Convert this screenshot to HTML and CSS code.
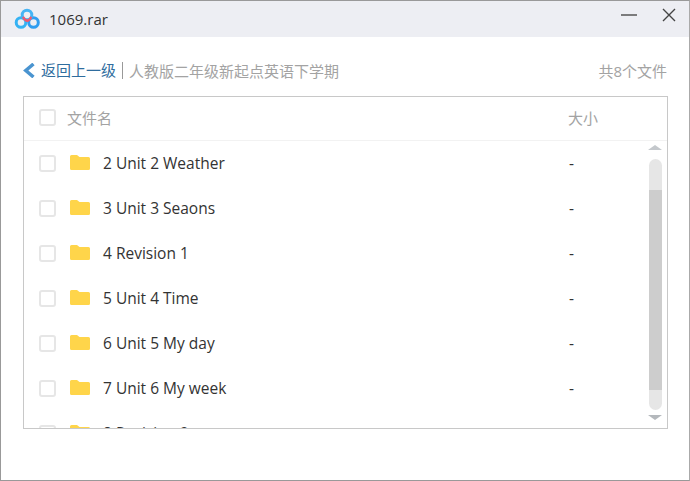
FILE: index.html
```html
<!DOCTYPE html>
<html lang="zh-CN">
<head>
    <meta charset="UTF-8">
    <title>1069.rar</title>
    <link rel="stylesheet" href="styles.css">
</head>
<body>
    <div class="window">
        <div class="titlebar">
            <svg class="logo" width="26" height="22" viewBox="0 0 26 22">
                <circle cx="7" cy="14.500" r="4.800" fill="none" stroke="#35b2f3" stroke-width="3"/>
                <circle cx="19.500" cy="14.500" r="4.800" fill="none" stroke="#2f9df0" stroke-width="3"/>
                <circle cx="13" cy="7" r="4.800" fill="none" stroke="#45b4f5" stroke-width="3"/>
                <path d="M8 9.500c1.500 3 3.200 4.400 5.200 4.400s3.700-1.400 5-4.400l-2-1.200c-.8 2-1.800 3-3 3s-2.300-1-3.200-3z" fill="#f0596f"/>
            </svg>
            <span class="filename">1069.rar</span>
            <div class="controls">
                <svg width="16" height="16" viewBox="0 0 16 16"><path d="M0 8h16" stroke="#555" stroke-width="1.500"/></svg>
                <svg width="16" height="16" viewBox="0 0 16 16"><path d="M2 2l12 12M14 2L2 14" stroke="#444" stroke-width="1.400"/></svg>
            </div>
        </div>

        <div class="crumbs">
            <svg class="back-icon" width="13" height="15" viewBox="0 0 13 15"><path d="M10.500 1L2.800 7.500l7.700 6.500" fill="none" stroke="#4a94d0" stroke-width="3.500"/></svg>
            <a class="back">返回上一级</a>
            <span class="path">人教版二年级新起点英语下学期</span>
            <span class="count">共8个文件</span>
        </div>

        <div class="file-table">
            <div class="table-head">
                <span class="check"></span>
                <span class="col-name">文件名</span>
                <span class="col-size">大小</span>
            </div>
            <div class="rows">
                <div class="row"><span class="check"></span><svg class="folder" viewBox="0 0 20 15"><use href="#folder"/></svg><span class="row-name">2 Unit 2 Weather</span><span class="row-size">-</span></div>
                <div class="row"><span class="check"></span><svg class="folder" viewBox="0 0 20 15"><use href="#folder"/></svg><span class="row-name">3 Unit 3 Seaons</span><span class="row-size">-</span></div>
                <div class="row"><span class="check"></span><svg class="folder" viewBox="0 0 20 15"><use href="#folder"/></svg><span class="row-name">4 Revision 1</span><span class="row-size">-</span></div>
                <div class="row"><span class="check"></span><svg class="folder" viewBox="0 0 20 15"><use href="#folder"/></svg><span class="row-name">5 Unit 4 Time</span><span class="row-size">-</span></div>
                <div class="row"><span class="check"></span><svg class="folder" viewBox="0 0 20 15"><use href="#folder"/></svg><span class="row-name">6 Unit 5 My day</span><span class="row-size">-</span></div>
                <div class="row"><span class="check"></span><svg class="folder" viewBox="0 0 20 15"><use href="#folder"/></svg><span class="row-name">7 Unit 6 My week</span><span class="row-size">-</span></div>
                <div class="row"><span class="check"></span><svg class="folder" viewBox="0 0 20 15"><use href="#folder"/></svg><span class="row-name">8 Revision 2</span></div>
            </div>
            <div class="scrollbar">
                <div class="arrow-up"></div>
                <div class="track"><div class="thumb"></div></div>
                <div class="arrow-down"></div>
            </div>
        </div>
    </div>

    <svg class="defs" width="0" height="0">
        <symbol id="folder" viewBox="0 0 20 15">
            <path d="M1.500 0h5.500l2.500 2h9a1.500 1.500 0 0 1 1.500 1.500v10a1.500 1.500 0 0 1-1.500 1.500h-17a1.500 1.500 0 0 1-1.500-1.500v-12a1.500 1.500 0 0 1 1.500-1.500z" fill="#ffd54a"/>
        </symbol>
    </svg>
</body>
</html>
```

FILE: styles.css
```css
html, body{
    margin: 0;
    padding: 0;
}
body{
    width: 690px;
    height: 481px;
    overflow: hidden;
    background-color: #fff;
    font-family: "Open Sans", "Noto Sans CJK SC", sans-serif;
}
.defs{
    display: block;
}
.window{
    box-sizing: border-box;
    width: 690px;
    height: 481px;
    border: 1px solid #999;
    border-right-color: #aaa;
    background-color: #fff;
}
.titlebar{
    display: flex;
    align-items: center;
    height: 36px;
    padding-left: 13px;
    background-color: #edeef3;
}
.logo{
    margin-right: 9px;
}
.filename{
    font-size: 15px;
    color: #333;
}
.controls{
    display: flex;
    gap: 24px;
    margin-left: auto;
    margin-right: 12px;
    margin-top: -9px;
}
.crumbs{
    display: flex;
    align-items: center;
    height: 20px;
    margin: 23px 22px 16px 22px;
    font-size: 15px;
}
.back-icon{
    margin-right: 5px;
}
.back{
    color: #2f6d9e;
    padding-right: 6px;
    line-height: 17px;
    border-right: 1px solid #999;
}
.path{
    color: #a3a3a3;
    padding-left: 6px;
}
.count{
    margin-left: auto;
    color: #a3a3a3;
}
.file-table{
    position: relative;
    box-sizing: border-box;
    width: 645px;
    height: 333px;
    margin-left: 22px;
    border: 1px solid #c8c8c8;
    overflow: hidden;
}
.table-head{
    display: flex;
    align-items: center;
    box-sizing: border-box;
    height: 44px;
    padding-bottom: 3px;
    border-bottom: 1px solid #f2f2f2;
    font-size: 15px;
    color: #a3a3a3;
}
.check{
    box-sizing: border-box;
    flex: none;
    width: 17px;
    height: 17px;
    margin-left: 15px;
    border: 2px solid #e6e6e6;
    border-radius: 3px;
    background-color: #fff;
}
.col-name{
    margin-left: 11px;
}
.col-size{
    position: absolute;
    left: 544px;
}
.row{
    position: relative;
    display: flex;
    align-items: center;
    height: 45px;
    font-size: 15.500px;
    color: #333;
}
.folder{
    flex: none;
    width: 20px;
    height: 15px;
    margin-left: 14px;
    margin-top: -2px;
}
.row-name{
    margin-left: 13px;
    margin-bottom: 2px;
}
.row-size{
    position: absolute;
    left: 545px;
    margin-bottom: 2px;
}
.scrollbar{
    position: absolute;
    top: 43px;
    right: 5px;
    display: flex;
    flex-direction: column;
    align-items: center;
    width: 14px;
}
.arrow-up{
    width: 0;
    height: 0;
    margin-top: 5px;
    border-left: 7px solid transparent;
    border-right: 7px solid transparent;
    border-bottom: 5px solid #c4c8cc;
}
.track{
    width: 13px;
    height: 251px;
    margin-top: 9px;
    border-radius: 7px;
    background-color: #e6e6e6;
    overflow: hidden;
}
.thumb{
    height: 200px;
    margin-top: 31px;
    background-color: #cdcdcd;
}
.arrow-down{
    width: 0;
    height: 0;
    margin-top: 5px;
    border-left: 7px solid transparent;
    border-right: 7px solid transparent;
    border-top: 5px solid #b4b8bc;
}
```
